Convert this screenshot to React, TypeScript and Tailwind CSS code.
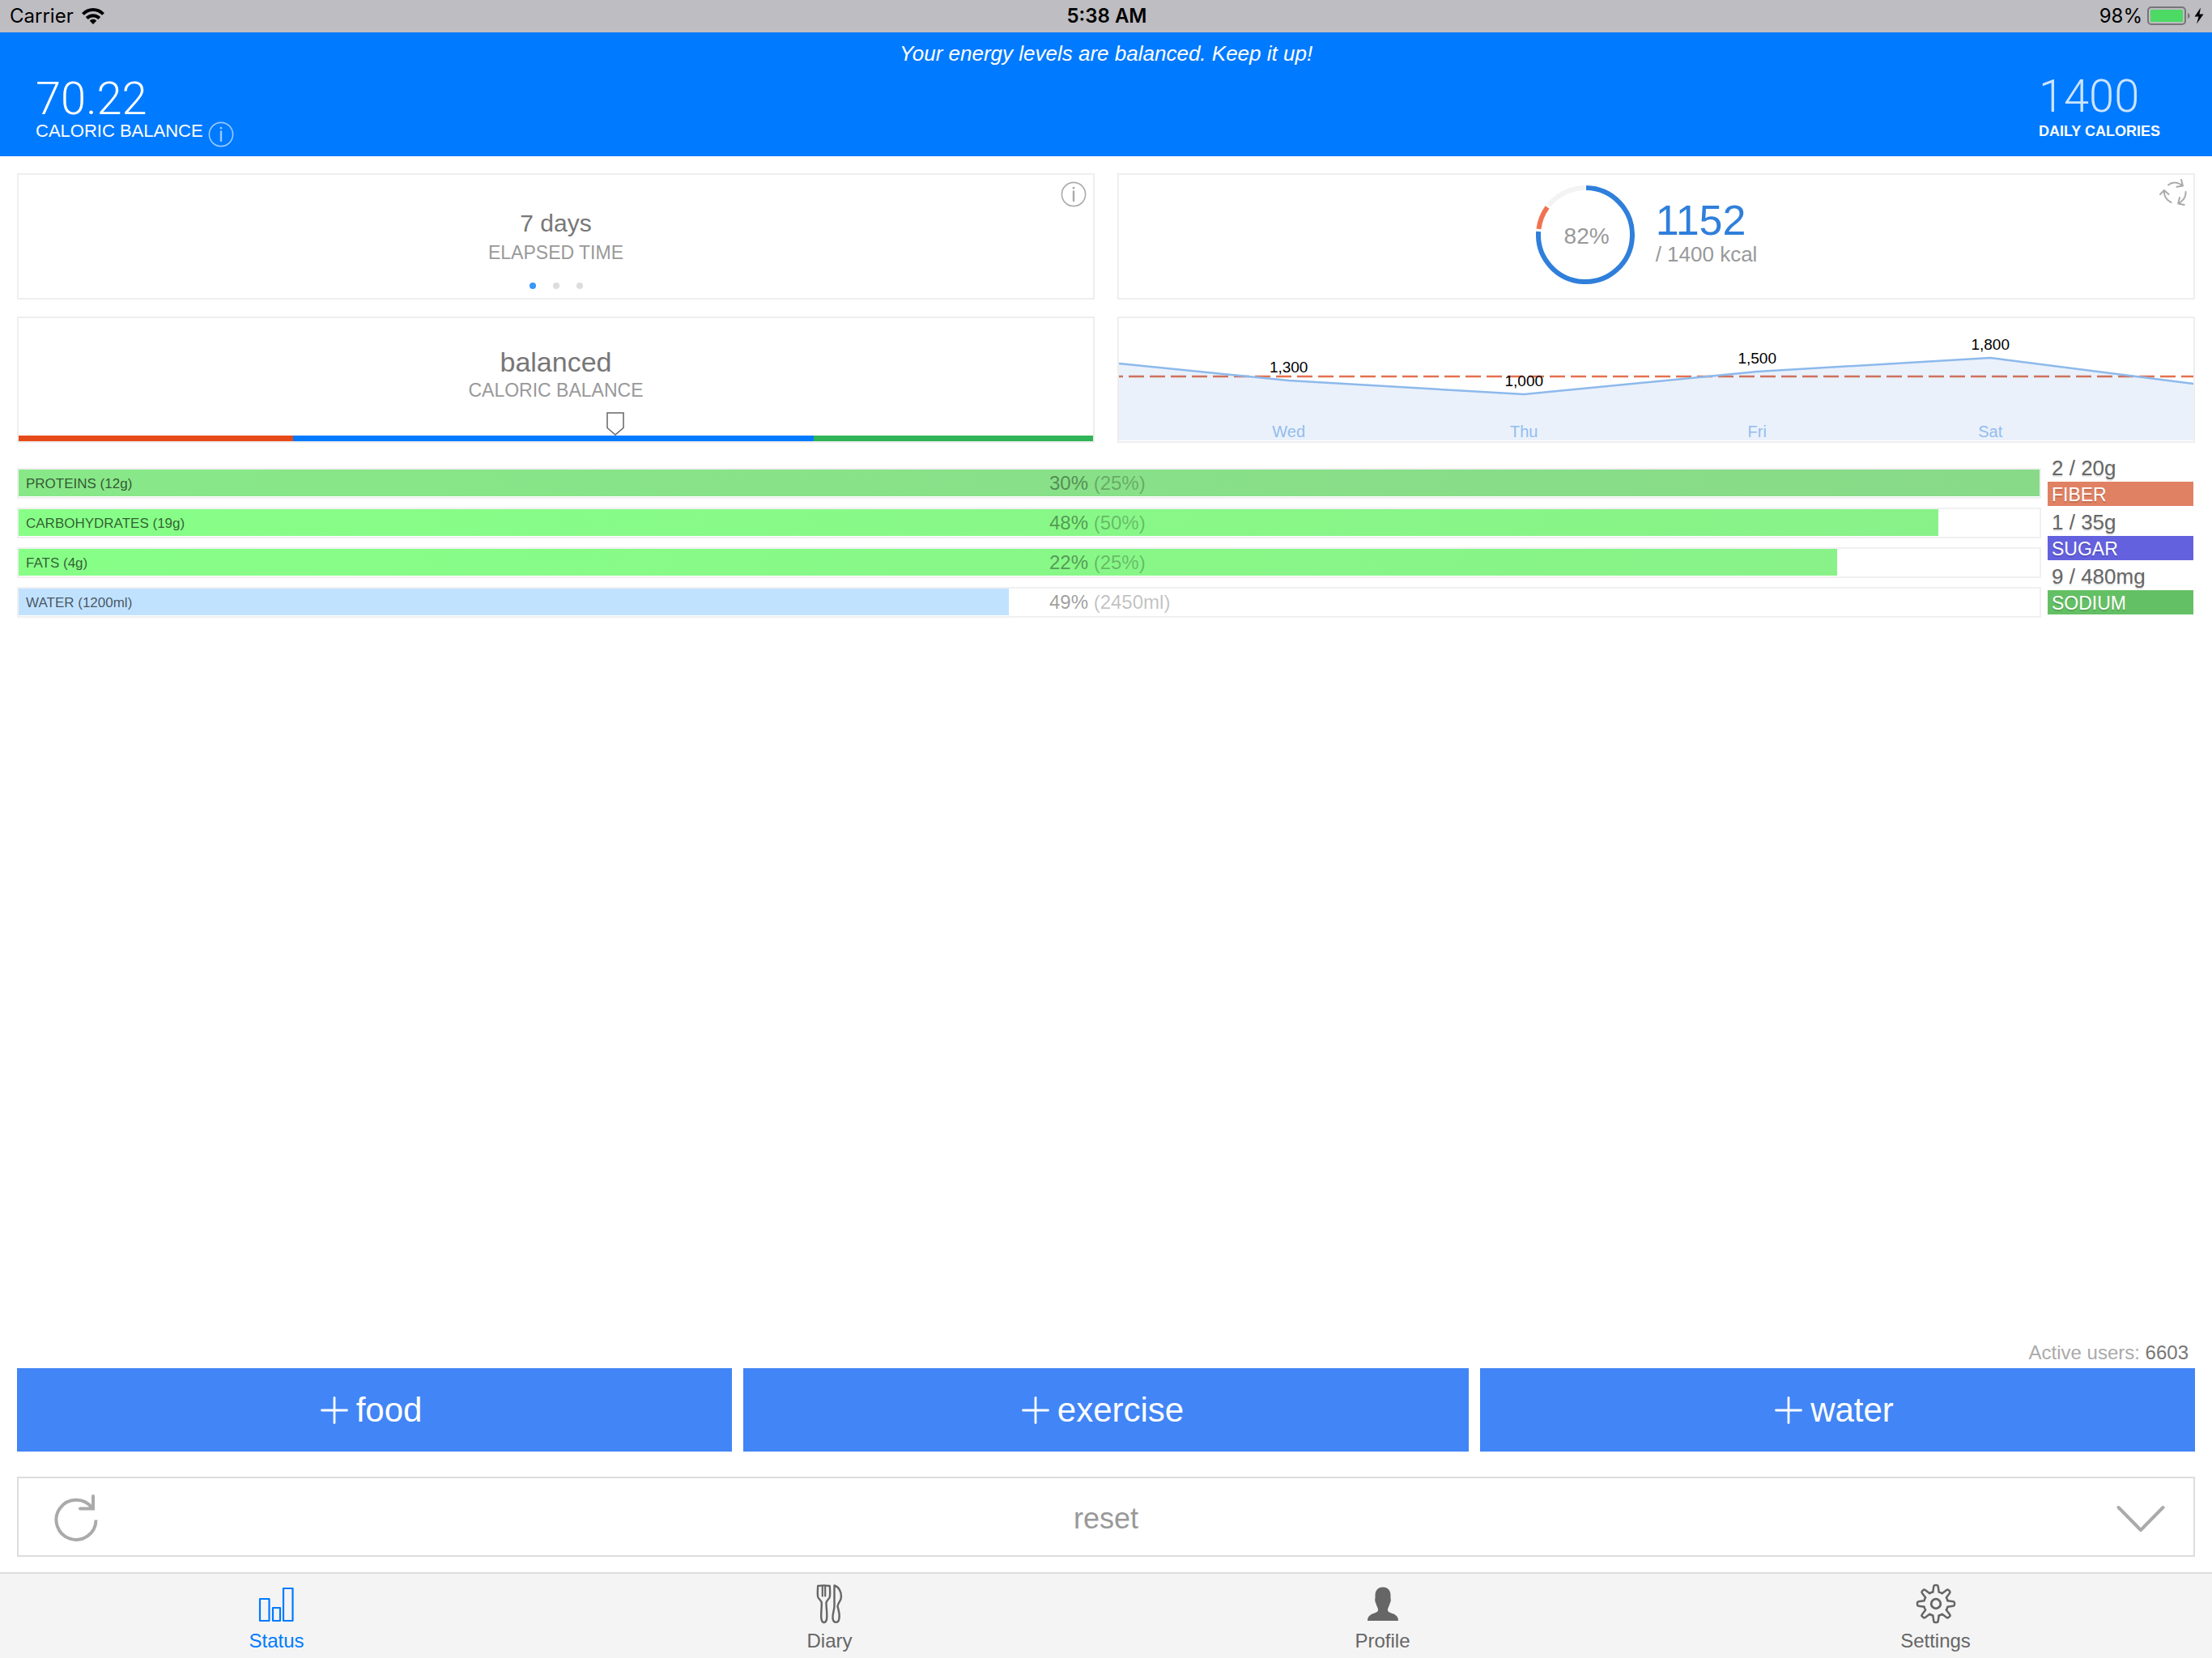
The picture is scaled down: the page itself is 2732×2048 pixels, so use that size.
import React from "react";

const strip = [
  { label: "PROTEINS (12g)", value: "30%", target: "(25%)", fill: 100, tone: "bg-linear-to-r from-[#88e888] to-[#88da88]" },
  { label: "CARBOHYDRATES (19g)", value: "48%", target: "(50%)", fill: 95, tone: "bg-linear-to-r from-[#87ff87] to-[#88f288]" },
  { label: "FATS (4g)", value: "22%", target: "(25%)", fill: 90, tone: "bg-linear-to-r from-[#87ff87] to-[#88f288]" },
  { label: "WATER (1200ml)", value: "49%", target: "(2450ml)", fill: 49, tone: "bg-[#c0e2ff]" },
];

const limits = [
  { name: "FIBER", value: "2 / 20g", tone: "bg-[#e08163]" },
  { name: "SUGAR", value: "1 / 35g", tone: "bg-[#6461de]" },
  { name: "SODIUM", value: "9 / 480mg", tone: "bg-[#64c064]" },
];

/* x positions are percentages of the chart width, y are pixels in its 152px height */
const points = [
  { x: 0, y: 56 },
  { x: 15.8, y: 77, value: "1,300", day: "Wed" },
  { x: 37.7, y: 94, value: "1,000", day: "Thu" },
  { x: 59.4, y: 66, value: "1,500", day: "Fri" },
  { x: 81.1, y: 49, value: "1,800", day: "Sat" },
  { x: 100, y: 81 },
];

function InfoIcon({ className }: { className: string }) {
  return (
    <svg viewBox="0 0 32 32" className={className} fill="none" stroke="currentColor" strokeWidth="1.6" aria-hidden="true">
      <circle cx="16" cy="16" r="14.6" />
      <path d="M16 12.4V24" strokeWidth="2.4" strokeLinecap="round" />
      <circle cx="16" cy="8.2" r="1.4" fill="currentColor" stroke="none" />
    </svg>
  );
}

function CycleIcon() {
  return (
    <svg viewBox="0 0 34 34" className="size-[34px]" fill="none" stroke="currentColor" strokeWidth="2" strokeLinecap="round" strokeLinejoin="round" aria-hidden="true">
      <path d="M11 8.5C16 4.5 23 4.500 29 9.500M27 2l2 7.500-7.500 1.300" />
      <path d="M32.500 17C33 22.500 29.500 28 23.500 31.500M25 24l-1.800 7.500 7.500 1.500" />
      <path d="M14.500 30C8.500 27 5.500 21.500 6 15.500M1 20l5-5 5.500 5" />
    </svg>
  );
}

function Donut() {
  const r = 58;
  const at = (deg: number) => {
    const a = ((deg - 90) * Math.PI) / 180;
    return `${(61 + r * Math.cos(a)).toFixed(2)} ${(61 + r * Math.sin(a)).toFixed(2)}`;
  };
  const arc = (from: number, to: number) => `M${at(from)}A${r} ${r} 0 ${to - from > 180 ? 1 : 0} 1 ${at(to)}`;
  return (
    <svg viewBox="0 0 122 122" className="size-[122px]" fill="none" strokeWidth="6" aria-hidden="true">
      <path d={arc(1, 274)} stroke="#2f7fdb" />
      <path d={arc(277, 306)} stroke="#f07351" />
      <path d={arc(309, 359)} stroke="#f3f3f3" />
    </svg>
  );
}

function WeekChart() {
  const line = points.map((p) => `${p.x * 10},${p.y}`).join(" ");
  return (
    <div className="relative h-[152px]">
      <svg viewBox="0 0 1000 152" preserveAspectRatio="none" className="absolute inset-0 size-full" fill="none" aria-hidden="true">
        <line x1="0" y1="72" x2="1000" y2="72" stroke="#e3714f" strokeWidth="2.500" strokeDasharray="19 7" strokeDashoffset="14" vectorEffect="non-scaling-stroke" />
        <polygon points={`0,151 ${line} 1000,151`} fill="#2f75db" fillOpacity="0.100" />
        <polyline points={line} stroke="#8db9ec" strokeWidth="2.500" vectorEffect="non-scaling-stroke" />
      </svg>
      {points.filter((p) => p.day).map((p) => (
        <React.Fragment key={p.day}>
          <span className="absolute -translate-x-1/2 -translate-y-full pb-1.5 text-[19px] leading-5 text-black" style={{ left: `${p.x}%`, top: p.y }}>{p.value}</span>
          <span className="absolute bottom-0 -translate-x-1/2 text-[20px] leading-6 text-[#93bdee]" style={{ left: `${p.x}%` }}>{p.day}</span>
        </React.Fragment>
      ))}
    </div>
  );
}

function StatusIcon() {
  return (
    <svg viewBox="0 0 50 50" className="size-[50px]" fill="none" stroke="currentColor" strokeWidth="2.200" strokeLinejoin="round" aria-hidden="true">
      <path d="M4 19h11.500v27h-11.500zM20 30h9v16h-9zM33 6h11.500v40h-11.500z" />
    </svg>
  );
}

function DiaryIcon() {
  return (
    <svg viewBox="0 0 50 50" className="size-[50px]" fill="none" stroke="currentColor" strokeWidth="2.400" strokeLinejoin="round" strokeLinecap="round" aria-hidden="true">
      <path d="M10.200 3C14 2.300 21 2.300 24.800 3C25.200 9 25.500 13 24.800 16.500C24 19.500 20.800 20.500 20.500 24C20.500 31 22 38 21 44C20 49.500 15.500 49.500 14.500 44C13.500 38 15 31 14.800 24C14.500 20.500 11 19.500 10.200 16.500C9.500 13 9.800 9 10.200 3z" />
      <path d="M15.800 3V15.500M19.200 3V15.500" strokeWidth="2.200" />
      <path d="M30.500 2.500C36 4 39 10 39 16C39 22 35 23 34.500 28C35.500 33 37.500 37 36.500 43C35.500 49.500 29.500 49.500 28.500 43C28 38 30.200 34 30.500 28z" />
    </svg>
  );
}

function ProfileIcon() {
  return (
    <svg viewBox="0 0 50 50" className="size-[50px]" fill="currentColor" aria-hidden="true">
      <path d="M25 4.500C31.500 4.500 34.500 9 34.500 14.500C34.500 17 34.300 18 34.800 19.500C35 22 34 23.500 33.500 25C32.500 28.500 31.500 29.500 31 31.500C30.500 35 33 35.500 36.500 37C41 38.500 44 41 44 46H6C6 41 9 38.500 13.500 37C17 35.500 19.500 35 19 31.500C18.500 29.500 17.500 28.500 16.500 25C16 23.500 15 22 15.200 19.500C15.700 18 15.500 17 15.500 14.500C15.500 9 18.500 4.500 25 4.500z" />
    </svg>
  );
}

function SettingsIcon() {
  const tooth = "M21.300 10.500L22.300 3.500Q22.500 2 24 2H26Q27.500 2 27.700 3.500L28.700 10.500Q30.500 11 32.600 12";
  return (
    <svg viewBox="0 0 50 50" className="size-[50px]" fill="none" stroke="currentColor" strokeWidth="2.500" strokeLinejoin="round" strokeLinecap="round" aria-hidden="true">
      {[0, 45, 90, 135, 180, 225, 270, 315].map((a) => (
        <path key={a} d={tooth} transform={`rotate(${a} 25 25)`} />
      ))}
      <circle cx="25" cy="25" r="5.800" strokeWidth="2.800" />
    </svg>
  );
}

const tabs = [
  { name: "Status", icon: <StatusIcon />, tone: "text-[#007aff]" },
  { name: "Diary", icon: <DiaryIcon />, tone: "text-[#666]" },
  { name: "Profile", icon: <ProfileIcon />, tone: "text-[#666]" },
  { name: "Settings", icon: <SettingsIcon />, tone: "text-[#666]" },
];

export default function App() {
  return (
    <div className="flex min-h-screen flex-col bg-white font-['Liberation_Sans',Arial,sans-serif]">
      <div className="grid h-10 grid-cols-3 items-center bg-[#bebdc2] pr-2.5 pl-3 font-['Inter',sans-serif] text-[24px] leading-10 text-black">
        <div className="flex items-center gap-2.5">
          <span>Carrier</span>
          <svg viewBox="0 0 28 20" className="h-5 w-7" fill="none" stroke="currentColor" strokeWidth="4" aria-hidden="true">
            <path d="M1.500 7.500C8 .3 20 .3 26.500 7.500" />
            <path d="M6.200 12.500C10.500 8 17.500 8 21.800 12.500" />
            <path d="M14 20L9.800 15.800C12 13.200 16 13.200 18.200 15.800z" fill="currentColor" stroke="none" />
          </svg>
        </div>
        <div className="text-center font-semibold">5:38 AM</div>
        <div className="flex items-center justify-end gap-1.5">
          <span>98%</span>
          <svg viewBox="0 0 70 24" className="h-6 w-[70px]" aria-hidden="true">
            <rect x="1" y="1" width="46" height="21" rx="4" fill="none" stroke="#75757a" strokeWidth="2" />
            <rect x="4" y="4" width="40" height="15" rx="1" fill="#4cd964" />
            <path d="M50 8C53.500 9 53.500 14 50 15z" fill="#75757a" />
            <path d="M66 1.500L58.500 12.500H63.500L61 21.500L69.500 9.500H64.500z" fill="#000" />
          </svg>
        </div>
      </div>

      <header className="bg-[#007aff] pb-[17px] text-white">
        <p className="pt-2.5 text-center text-[26px] leading-8 italic">Your energy levels are balanced. Keep it up!</p>
        <div className="flex justify-between pr-16 pl-11">
          <div>
            <div className="pt-3.5 font-['Roboto',sans-serif] text-[56px] leading-[52px] font-light">70.22</div>
            <div className="flex h-7 items-center gap-1.5 text-[22px] leading-6">
              <span>CALORIC BALANCE</span>
              <button type="button" aria-label="About caloric balance" className="pt-2 text-white/60">
                <InfoIcon className="size-8" />
              </button>
            </div>
          </div>
          <div>
            <div className="pt-2 font-['Roboto',sans-serif] text-[56px] leading-[58px] font-light text-white/80">1400</div>
            <div className="text-[18px] leading-7 font-bold">DAILY CALORIES</div>
          </div>
        </div>
      </header>

      <main className="flex grow flex-col px-[21px] pt-[21px]">
        <div className="grid grid-cols-2 gap-x-7 gap-y-[21px]">
          <section className="relative flex h-[156px] flex-col items-center border-2 border-[#eee] pt-[42px]">
            <div className="text-[30px] leading-9 text-[#777]">7 days</div>
            <div className="text-[23px] leading-9 text-[#999]">ELAPSED TIME</div>
            <div className="flex gap-[21px] pt-[19px]">
              <span className="size-2 rounded-full bg-[#3797f9]" />
              <span className="size-2 rounded-full bg-[#ddd]" />
              <span className="size-2 rounded-full bg-[#ddd]" />
            </div>
            <button type="button" aria-label="About elapsed time" className="absolute top-2 right-2 text-[#aaa]">
              <InfoIcon className="size-8" />
            </button>
          </section>

          <section className="relative flex h-[156px] items-center justify-center gap-[26px] border-2 border-[#eee] pr-6 pb-1">
            <div className="grid place-items-center *:col-start-1 *:row-start-1">
              <Donut />
              <span className="pt-1 pl-1 text-[28px] leading-8 text-[#999]">82%</span>
            </div>
            <div className="pb-1">
              <div className="text-[52px] leading-[52px] text-[#2f7fdb]">1152</div>
              <div className="text-[26px] leading-8 text-[#999]">/ 1400 kcal</div>
            </div>
            <button type="button" aria-label="Refresh" className="absolute top-1 right-2 text-[#aaa]">
              <CycleIcon />
            </button>
          </section>

          <section className="flex h-[156px] flex-col border-2 border-[#eee] pt-9">
            <div className="text-center text-[34px] leading-9 text-[#777]">balanced</div>
            <div className="text-center text-[23px] leading-[34px] text-[#999]">CALORIC BALANCE</div>
            <div className="mt-auto flex pl-[54.7%]">
              <svg viewBox="0 0 22 29" className="h-[29px] w-[22px]" fill="#fff" stroke="#666" strokeWidth="1.500" aria-hidden="true">
                <path d="M1 1H21V19.500L11 28L1 19.500z" />
              </svg>
            </div>
            <div className="grid h-[7px] grid-cols-[340fr_643fr_346fr]">
              <span className="bg-[#e64a19]" />
              <span className="bg-[#007aff]" />
              <span className="bg-[#2fb457]" />
            </div>
          </section>

          <section className="h-[156px] overflow-hidden border-2 border-[#eee]">
            <WeekChart />
          </section>
        </div>

        <div className="flex gap-2 pt-[11px]">
          <div className="flex grow flex-col gap-[11px] pt-5">
            {strip.map((row) => (
              <div key={row.label} className="relative h-[38px] border-2 border-[#f0f0f0]">
                <div className={`h-[33px] ${row.tone}`} style={{ width: `${row.fill}%` }} />
                <div className="absolute inset-0 grid grid-cols-[51%_1fr] items-center leading-8">
                  <span className="pt-0.5 pl-[9px] text-[17px] text-black/65">{row.label}</span>
                  <span className="text-[24px] text-black/40">
                    {row.value} <span className="text-black/25">{row.target}</span>
                  </span>
                </div>
              </div>
            ))}
          </div>
          <dl className="mr-0.5 w-[180px]">
            {limits.map((l) => (
              <div key={l.name} className="flex flex-col-reverse">
                <dt className={`h-[30px] pl-[5px] text-[23px] leading-8 text-white text-shadow-[0_2px_1px_rgb(0_0_0/0.15)] ${l.tone}`}>{l.name}</dt>
                <dd className="h-[37px] pt-1 pl-[5px] text-[26px] leading-8 text-[#666] text-shadow-[0_2px_1px_rgb(0_0_0/0.12)]">{l.value}</dd>
              </div>
            ))}
          </dl>
        </div>

        <p className="mt-auto pr-2 pb-[3px] text-right text-[24px] leading-8 text-[#aaa]">
          Active users: <span className="text-[#777]">6603</span>
        </p>
        <div className="grid grid-cols-[883fr_896fr_883fr] gap-3.5">
          {["food", "exercise", "water"].map((name) => (
            <button key={name} type="button" className="flex h-[103px] items-center justify-center gap-2.5 bg-[#4285f6] pr-2 text-[42px] leading-[48px] text-white">
              <svg viewBox="0 0 34 34" className="size-[34px]" stroke="currentColor" strokeWidth="2.800" strokeLinecap="round" aria-hidden="true">
                <path d="M17 1.500V32.500M1.500 17H32.500" />
              </svg>
              <span>{name}</span>
            </button>
          ))}
        </div>
        <div className="mt-[31px] mb-[19px] grid h-[99px] grid-cols-[64px_1fr_64px] items-center border-2 border-[#ddd] pr-[35px] pl-10 text-[#aaa]">
          <button type="button" aria-label="Reload" className="justify-self-start">
            <svg viewBox="0 0 60 60" className="size-[60px]" fill="none" stroke="currentColor" strokeWidth="4" aria-hidden="true">
              <path d="M55.500 33.500A24.500 24.500 0 1 1 50.500 18.500" />
              <path d="M52 4V19.500H36" strokeLinecap="round" />
            </svg>
          </button>
          <button type="button" className="pt-1 pr-[5px] text-[36px] leading-10 text-[#999]">reset</button>
          <button type="button" aria-label="Expand" className="justify-self-end pt-1">
            <svg viewBox="0 0 60 34" className="h-[34px] w-[60px]" fill="none" stroke="currentColor" strokeWidth="4" strokeLinecap="round" strokeLinejoin="round" aria-hidden="true">
              <path d="M2.500 3L30 31L57.500 3" />
            </svg>
          </button>
        </div>
      </main>

      <nav className="grid h-[106px] grid-cols-4 border-t-2 border-[#ddd] bg-[#f4f4f4]">
        {tabs.map((t) => (
          <a key={t.name} href="#" className={`flex flex-col items-center gap-[5px] pt-3 text-[24px] leading-8 ${t.tone}`}>
            {t.icon}
            <span>{t.name}</span>
          </a>
        ))}
      </nav>
    </div>
  );
}
